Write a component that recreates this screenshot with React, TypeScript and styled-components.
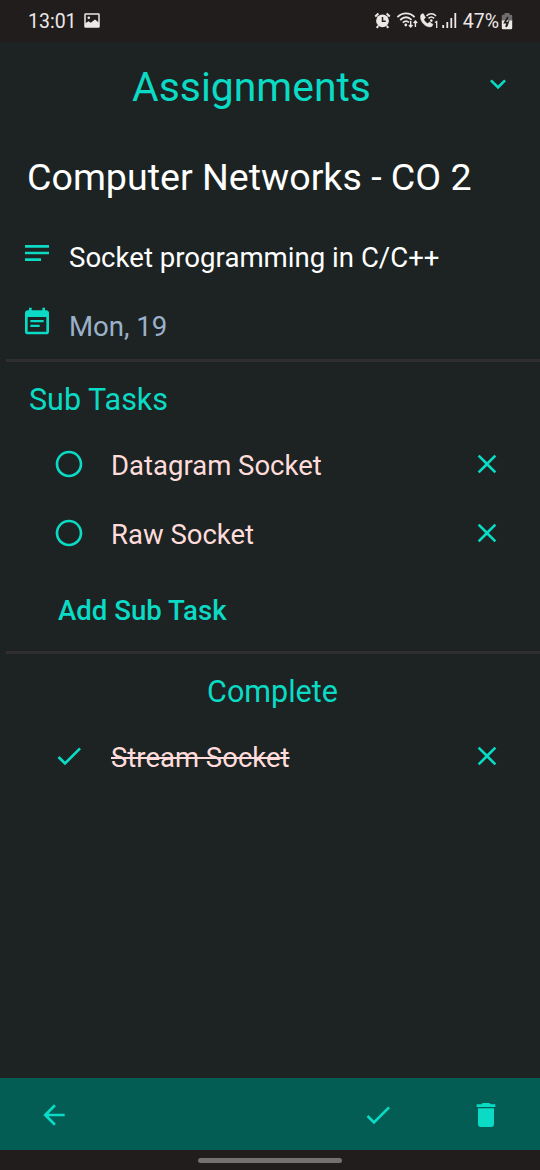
import React from "react";
import styled, { createGlobalStyle } from "styled-components";

const accent = "#0bdac5";

const GlobalStyle = createGlobalStyle`
  * { box-sizing: border-box; }
  body { margin: 0; background: #1c2322; }
`;

const Screen = styled.div`
  display: flex;
  flex-direction: column;
  width: 540px;
  height: 1170px;
  background: #1c2322;
  font-family: Roboto, "Liberation Sans", sans-serif;
  overflow: hidden;
`;

const StatusBar = styled.header`
  display: flex;
  align-items: center;
  justify-content: space-between;
  height: 42px;
  padding: 0 27px 0 28px;
  background: #211d1d;
  color: #ece8e6;
  font-size: 19.5px;
`;

const StatusGroup = styled.div<{ $gap: number }>`
  display: flex;
  align-items: center;
  height: 42px;
  gap: ${(p) => p.$gap}px;
`;

const StatusText = styled.span<{ $inset?: number }>`
  padding: 2px 0 0 ${(p) => p.$inset ?? 0}px;
  line-height: 42px;
  white-space: nowrap;
`;

const TitleBar = styled.div`
  display: flex;
  align-items: center;
  justify-content: space-between;
  height: 91px;
  padding: 0 26px 0 132px;
`;

const Title = styled.h1`
  margin: 0;
  font-size: 40.9px;
  font-weight: 400;
  line-height: 91px;
  color: ${accent};
`;

const Glyph = styled.svg`
  display: block;
  flex: none;
  width: 32px;
  height: 32px;
  fill: currentColor;
`;

const IconButton = styled.button`
  display: flex;
  padding: 0;
  border: 0;
  background: none;
  color: ${accent};
`;

const TitleToggle = styled(IconButton)`
  margin-top: -7px;
`;

const Heading = styled.h2`
  margin: 0;
  padding-left: 27px;
  height: 89px;
  font-size: 37.6px;
  font-weight: 400;
  line-height: 88px;
  color: #fff;
`;

const DetailRow = styled.div<{ $height: number; $lift: number }>`
  display: flex;
  align-items: center;
  height: ${(p) => p.$height}px;
  padding-left: 21px;
  gap: 16px;
  color: ${accent};
  svg { margin-top: -${(p) => p.$lift}px; }
`;

const DetailText = styled.span<{ $muted?: boolean }>`
  margin-top: 2px;
  font-size: 27.6px;
  line-height: 66px;
  color: ${(p) => (p.$muted ? "#9bb0c9" : "#fff")};
`;

const Section = styled.section`
  display: flex;
  flex-direction: column;
`;

const Divider = styled.hr`
  flex: none;
  height: 3px;
  width: 534px;
  margin: 0 0 0 6px;
  border: 0;
  background: #302e30;
`;

const SectionTitle = styled.h3<{ $centered?: boolean }>`
  margin: 0;
  padding: ${(p) => (p.$centered ? "0 0 0 5px" : "0 0 0 29px")};
  height: 67px;
  line-height: ${(p) => (p.$centered ? 76 : 75)}px;
  text-align: ${(p) => (p.$centered ? "center" : "left")};
  font-size: 30.5px;
  font-weight: 400;
  color: ${accent};
`;

const TaskRow = styled.div`
  display: flex;
  align-items: center;
  height: 69px;
  padding: 0 37px 0 53px;
`;

const TaskLabel = styled.span<{ $done?: boolean }>`
  flex: 1;
  padding: 5px 0 0 26px;
  font-size: 27.5px;
  line-height: 66px;
  color: #ffdcdb;
  text-decoration: ${(p) => (p.$done ? "line-through" : "none")};
  text-decoration-thickness: 2px;
`;

const AddTask = styled.button`
  align-self: flex-start;
  height: 84px;
  padding: 4px 0 0 58px;
  border: 0;
  background: none;
  font-family: inherit;
  font-size: 27.6px;
  font-weight: 500;
  line-height: 80px;
  color: ${accent};
`;

const BottomBar = styled.nav`
  display: flex;
  align-items: center;
  height: 72px;
  margin-top: auto;
  padding: 2px 38px 0 38px;
  background: #035d54;
`;

const Actions = styled.div`
  display: flex;
  gap: 76px;
  margin-left: auto;
`;

const GestureArea = styled.footer`
  display: flex;
  justify-content: center;
  height: 20px;
  padding-top: 8px;
  background: #211d1d;
`;

const GestureHandle = styled.div`
  width: 144px;
  height: 5px;
  border-radius: 3px;
  background: #757070;
`;

const paths = {
  chevron: "M16.59 8.59L12 13.17 7.41 8.59 6 10l6 6 6-6z",
  notes: "M3 18h12v-2H3v2zM3 6v2h18V6H3zm0 7h18v-2H3v2z",
  calendar:
    "M19 4h-1V2h-2v2H8V2H6v2H5c-1.11 0-1.99.9-1.99 2L3 20c0 1.1.89 2 2 2h14c1.1 0 2-.9 2-2V6c0-1.1-.9-2-2-2zm0 16H5V9h14v11zM17 11.3H7v1.6h10v-1.6zM14 14.9H7v1.6h7v-1.6z",
  circle:
    "M12 2C6.48 2 2 6.48 2 12s4.48 10 10 10 10-4.48 10-10S17.52 2 12 2zm0 18c-4.42 0-8-3.58-8-8s3.58-8 8-8 8 3.58 8 8-3.58 8-8 8z",
  close:
    "M19 6.41L17.59 5 12 10.59 6.41 5 5 6.41 10.59 12 5 17.59 6.41 19 12 13.41 17.59 19 19 17.59 13.41 12z",
  check: "M9 16.17L4.83 12l-1.42 1.41L9 19 21 7l-1.41-1.41z",
  back: "M20 11H7.83l5.59-5.59L12 4l-8 8 8 8 1.41-1.41L7.83 13H20v-2z",
  trash:
    "M6 19c0 1.1.9 2 2 2h8c1.1 0 2-.9 2-2V7H6v12zM19 4h-3.5l-1-1h-5l-1 1H5v2h14V4z",
};

const Icon = ({ name }: { name: keyof typeof paths }) => (
  <Glyph viewBox="0 0 24 24" aria-hidden>
    <path d={paths[name]} />
  </Glyph>
);

const StatusIcon = styled.svg`
  display: block;
  flex: none;
  fill: none;
  stroke: currentColor;
`;

const PictureIcon = () => (
  <StatusIcon width="16" height="16" viewBox="0 0 16 16">
    <rect x="1" y="1" width="14" height="13" rx="0.5" strokeWidth="1.5" />
    <circle cx="4.8" cy="4.7" r="1.3" fill="currentColor" stroke="none" />
    <path d="M1 10.5l3.5-2.3 2.3 1.5L11 6.4l4 3.3V14H1z" fill="currentColor" stroke="none" />
  </StatusIcon>
);

const StatusSymbols = () => (
  <StatusIcon width="84" height="18" viewBox="374 12 84 18">
    <g>
      <circle cx="382.5" cy="20.8" r="6.4" fill="currentColor" stroke="none" />
      <path d="M375.2 16.6l3.2-3M389.8 16.6l-3.2-3M378.2 26l-1.5 1.8M386.8 26l1.5 1.8" strokeWidth="2" />
      <path d="M382.5 17v4.3h3.2" stroke="#211d1d" strokeWidth="1.5" />
    </g>
    <g strokeWidth="1.8">
      <path d="M397.4 17.1c5-4.9 12.3-4.9 17.2 0M400.2 20c3.6-3.3 8-3.3 11.4-.2M402.8 22.7c2-1.9 4.3-2 6.2-.3" />
      <circle cx="405.8" cy="25" r="1.4" fill="currentColor" stroke="none" />
      <path d="M410.7 21v6M408.9 25l1.8 2 1.8-2M415.4 27v-6M413.6 23l1.8-2 1.8 2" strokeWidth="1.4" />
    </g>
    <g>
      <path d="M421 14.6l2.2-1 2.3 4-1.7 2c.8 1.8 2 3 3.8 4l2-1.6 3.4 2.4-1.2 2.1c-5.5 2.4-13.4-5.7-10.8-11.9z" fill="currentColor" strokeWidth="0.5" />
      <path d="M426.5 16c2.7-2.9 6.8-2.9 9.5 0M428.5 18.4c1.6-1.6 4-1.6 5.6 0" strokeWidth="1.5" />
      <circle cx="431.3" cy="20.6" r="1.3" fill="currentColor" stroke="none" />
      <path d="M434.9 22.5l1.8-1v6.4" strokeWidth="1.3" />
    </g>
    <path d="M443.2 28v-3M447.3 28v-6M451.3 28v-10M455.3 28V13" strokeWidth="1.8" />
  </StatusIcon>
);

const BatteryIcon = () => (
  <StatusIcon width="12" height="17" viewBox="0 0 12 17">
    <path d="M3.5 0h5v1.8H10a1.2 1.2 0 011.2 1.2V9H.8V3A1.2 1.2 0 012 1.8h1.5z" fill="#706d6c" stroke="none" />
    <path d="M.8 7.5h10.4V15a1.2 1.2 0 01-1.2 1.2H2A1.2 1.2 0 01.8 15z" fill="currentColor" stroke="none" />
    <path d="M7 4L3.6 9.6h2.6L5 14" stroke="#211d1d" strokeWidth="1.6" />
    <path d="M8 7.5L6 13.5" stroke="#211d1d" strokeWidth="1" />
  </StatusIcon>
);

const Task = ({ label, done }: { label: string; done?: boolean }) => (
  <TaskRow>
    <IconButton aria-label={done ? "Mark incomplete" : "Mark complete"}>
      <Icon name={done ? "check" : "circle"} />
    </IconButton>
    <TaskLabel $done={done}>{label}</TaskLabel>
    <IconButton aria-label="Remove">
      <Icon name="close" />
    </IconButton>
  </TaskRow>
);

export default function App() {
  return (
    <Screen>
      <GlobalStyle />
      <StatusBar>
        <StatusGroup $gap={7}>
          <StatusText>13:01</StatusText>
          <PictureIcon />
        </StatusGroup>
        <StatusGroup $gap={2}>
          <StatusSymbols />
          <StatusText $inset={3}>47%</StatusText>
          <BatteryIcon />
        </StatusGroup>
      </StatusBar>
      <TitleBar>
        <Title>Assignments</Title>
        <TitleToggle aria-label="Choose list">
          <Icon name="chevron" />
        </TitleToggle>
      </TitleBar>
      <Heading>Computer Networks - CO 2</Heading>
      <DetailRow $height={70} $lift={9}>
        <Icon name="notes" />
        <DetailText>Socket programming in C/C++</DetailText>
      </DetailRow>
      <DetailRow $height={67} $lift={10}>
        <Icon name="calendar" />
        <DetailText $muted>Mon, 19</DetailText>
      </DetailRow>
      <Divider />
      <Section>
        <SectionTitle>Sub Tasks</SectionTitle>
        <Task label="Datagram Socket" />
        <Task label="Raw Socket" />
        <AddTask>Add Sub Task</AddTask>
      </Section>
      <Divider />
      <Section>
        <SectionTitle $centered>Complete</SectionTitle>
        <Task label="Stream Socket" done />
      </Section>
      <BottomBar>
        <IconButton aria-label="Back">
          <Icon name="back" />
        </IconButton>
        <Actions>
          <IconButton aria-label="Save">
            <Icon name="check" />
          </IconButton>
          <IconButton aria-label="Delete">
            <Icon name="trash" />
          </IconButton>
        </Actions>
      </BottomBar>
      <GestureArea>
        <GestureHandle />
      </GestureArea>
    </Screen>
  );
}
